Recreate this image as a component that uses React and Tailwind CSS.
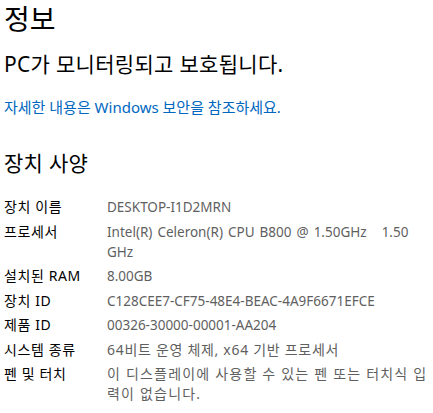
export default function App() {
  const rows = [
    ["장치 이름", "DESKTOP-I1D2MRN", 0],
    ["프로세서", "Intel(R) Celeron(R) CPU B800 @ 1.50GHz   1.50 GHz", 0],
    ["설치된 RAM", "8.00GB", 0],
    ["장치 ID", "C128CEE7-CF75-48E4-BEAC-4A9F6671EFCE", 0],
    ["제품 ID", "00326-30000-00001-AA204", 0],
    ["시스템 종류", "64비트 운영 체제, x64 기반 프로세서", 1],
    ["펜 및 터치", "이 디스플레이에 사용할 수 있는 펜 또는 터치식 입력이 없습니다.", 2],
  ];
  const cls = [
    "w-[322px] text-[#5f5f5f] whitespace-pre-wrap text-[13.5px] [word-spacing:1.5px]",
    "w-[322px] text-[#5f5f5f] whitespace-pre-wrap tracking-[0.7px] break-all",
    "w-[322px] text-[#5f5f5f] whitespace-pre-wrap tracking-[1.2px] break-all",
  ];
  return (
    <div
      className="w-[433px] h-[413px] bg-white overflow-hidden pl-[4px] pt-[1px] text-black"
      style={{ fontFamily: '"Noto Sans", "Noto Sans CJK KR", sans-serif' }}
    >
      <div className="text-[28px] leading-[36px]">정보</div>
      <div className="text-[21px] leading-[28px] mt-[13px] tracking-[0.3px]">PC가 모니터링되고 보호됩니다.</div>
      <div className="text-[15px] leading-[20px] mt-[19px] text-[#0067c0]">
        자세한 내용은 Windows 보안을 참조하세요.
      </div>
      <div className="text-[21px] leading-[28px] mt-[32px] tracking-[0.3px]">장치 사양</div>
      <div className="mt-[20px] flex flex-col gap-[4.5px]">
        {rows.map(([k, v, t]) => (
          <div key={k} className="flex text-[14px] leading-[20px]">
            <div className="w-[103px] shrink-0 tracking-[0.6px]">{k}</div>
            <div className={cls[t]}>{v}</div>
          </div>
        ))}
      </div>
    </div>
  );
}
